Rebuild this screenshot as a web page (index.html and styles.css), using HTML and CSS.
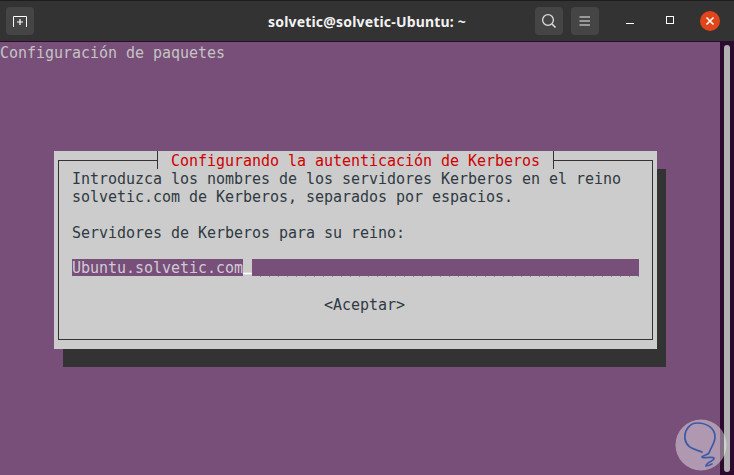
FILE: index.html
```html
<!DOCTYPE html>
<html lang="es">
<head>
<meta charset="utf-8">
<title>solvetic@solvetic-Ubuntu: ~</title>
<link rel="stylesheet" href="styles.css">
</head>
<body>
<div class="window">
  <header class="titlebar">
    <button class="tool-btn new-tab" aria-label="Nueva pestaña">
      <svg width="16" height="14" viewBox="0 0 16 14"><path d="M1.5 13 V2.5 H14.5 V13" fill="none" stroke="#fff" stroke-width="1"/><path d="M8 5 V11 M5 8 H11" fill="none" stroke="#fff" stroke-width="1.2"/></svg>
    </button>
    <div class="title">solvetic@solvetic-Ubuntu: ~</div>
    <div class="actions">
      <button class="tool-btn" aria-label="Buscar">
        <svg width="16" height="16" viewBox="0 0 16 16"><circle cx="7" cy="7" r="5.4" fill="none" stroke="#ddd" stroke-width="1.3"/><path d="M11 11 L14.5 14.5" stroke="#ddd" stroke-width="1.6"/></svg>
      </button>
      <button class="tool-btn" aria-label="Menú">
        <svg width="12" height="10" viewBox="0 0 12 10"><path d="M0 .5 H10.5 M0 4.5 H10.5 M0 8.5 H10.5" transform="translate(.5 .5)" stroke="#eee" stroke-width="1"/></svg>
      </button>
    </div>
    <div class="win-controls">
      <span class="win-btn minimize"></span>
      <span class="win-btn maximize"></span>
      <span class="win-btn close">
        <svg width="10" height="10" viewBox="0 0 10 10"><path d="M1.5 1.5 L8.5 8.5 M8.5 1.5 L1.5 8.5" stroke="#fff" stroke-width="1.6"/></svg>
      </span>
    </div>
  </header>
  <main class="terminal">
    <div class="screen">
      <div class="heading">Configuración de paquetes</div>
      <section class="dialog">
        <div class="frame">
          <h1 class="dialog-title">Configurando la autenticación de Kerberos</h1>
          <p class="line">Introduzca los nombres de los servidores Kerberos en el reino</p>
          <p class="line">solvetic.com de Kerberos, separados por espacios.</p>
          <p class="line blank"></p>
          <p class="line">Servidores de Kerberos para su reino:</p>
          <p class="line blank"></p>
          <div class="input"><span class="value">Ubuntu.solvetic.com</span><span class="cursor">_</span><span class="rest"></span></div>
          <p class="line blank"></p>
          <p class="line action">&lt;Aceptar&gt;</p>
        </div>
      </section>
    </div>
    <div class="scrollbar"><div class="thumb"></div></div>
  </main>
  <svg class="watermark" width="52" height="52" viewBox="0 0 52 52">
    <circle cx="26" cy="26" r="25.5" fill="#fff" fill-opacity=".42"/>
    <path d="M27 33 C20 30 12 30 10 20 C9 11 15 4 22 4 C32 4 40 9 40 18 C40 24 36 28 34 34 C33 36 28 36 27 38 C27 40 38 37 39 39 C40 42 31 43 31 47 C33 47 35 46 37 45" fill="none" stroke="#3b5aa8" stroke-width="1.7" stroke-linecap="round"/>
  </svg>
</div>
</body>
</html>
```

FILE: styles.css
```css
* { box-sizing: border-box; }
html, body { margin: 0; padding: 0; }
body { width: 734px; height: 475px; overflow: hidden; background: #784f78; }

.window { position: relative; width: 734px; height: 475px; display: flex; flex-direction: column; }

.titlebar {
  flex: 0 0 42px;
  position: relative;
  display: flex;
  align-items: center;
  padding: 0 0 0 6px;
  background: #333333;
  border-top: 1px solid #1d1d1d;
  border-bottom: 1px solid #2c0a30;
}
.tool-btn {
  width: 28px; height: 28px;
  padding: 0; border: 0;
  border-radius: 4px;
  background: #454545;
  display: flex; align-items: center; justify-content: center;
}
.title {
  position: absolute;
  left: 0; right: 0; top: 12px;
  text-align: center;
  font: 700 14px/17px "Noto Sans", sans-serif;
  letter-spacing: 0.18px;
  color: #f2f2f2;
}
.actions { display: flex; gap: 8px; margin-left: 501px; }
.win-controls { display: flex; align-items: center; margin-left: 27px; }
.win-btn { display: block; }
.minimize { width: 8px; height: 1px; background: #fff; margin-top: 5px; }
.maximize { width: 8px; height: 8px; border: 1px solid #fff; margin-left: 32px; margin-top: -3px; }
.close {
  width: 20px; height: 20px; margin-left: 26px; margin-top: -1px;
  border-radius: 50%; background: #e1461a;
  display: flex; align-items: center; justify-content: center;
}

.terminal { flex: 1; display: flex; min-height: 0; }
.screen {
  flex: 1;
  padding-top: 2px;
  font: 15px/18px "DejaVu Sans Mono", monospace;
  letter-spacing: -0.03px;
  color: #c4c4c4;
}
.heading { height: 18px; }

.dialog {
  width: 603px; height: 198px;
  margin: 89px 0 0 54px;
  padding: 9px 4px;
  background: #cccccc;
  box-shadow: 9px 18px 0 #333333;
}
.frame {
  position: relative;
  height: 180px;
  border: 1px solid #333333;
  color: #2f3a42;
}
.dialog-title {
  position: absolute;
  left: 98px; top: -10px;
  width: 397px; height: 18px;
  margin: 0;
  border-left: 1px solid #333;
  border-right: 1px solid #333;
  background: #cccccc;
  text-align: center;
  font: inherit;
  line-height: 20px;
  letter-spacing: inherit;
  color: #d00000;
}
.line { margin: 0 0 0 13px; height: 18px; white-space: pre; }
.frame .line:first-of-type { margin-top: 9px; }
.input {
  display: flex;
  margin: -1px 0 1px 13px;
  width: 567px; height: 18px;
}
.value { background: #784f78; color: #cfcbd6; height: 17px; width: 171px; }
.cursor { width: 9px; height: 17px; line-height: 15px; color: #ffffff; font-weight: 700; }
.rest {
  flex: 1;
  background:
    linear-gradient(#784f78, #784f78) top / 100% 17px no-repeat,
    repeating-linear-gradient(90deg, transparent 0 8px, #a08c9c 8px 9px) bottom / 100% 1px no-repeat;
}
.action { margin-left: 265px; }

.scrollbar {
  flex: 0 0 14px;
  padding: 3px 4px 3px 4px;
  background: #2c0a30;
}
.thumb { height: 100%; border-radius: 3px; background: #b0b0b0; }

.watermark { position: absolute; left: 675px; top: 419px; }
```
